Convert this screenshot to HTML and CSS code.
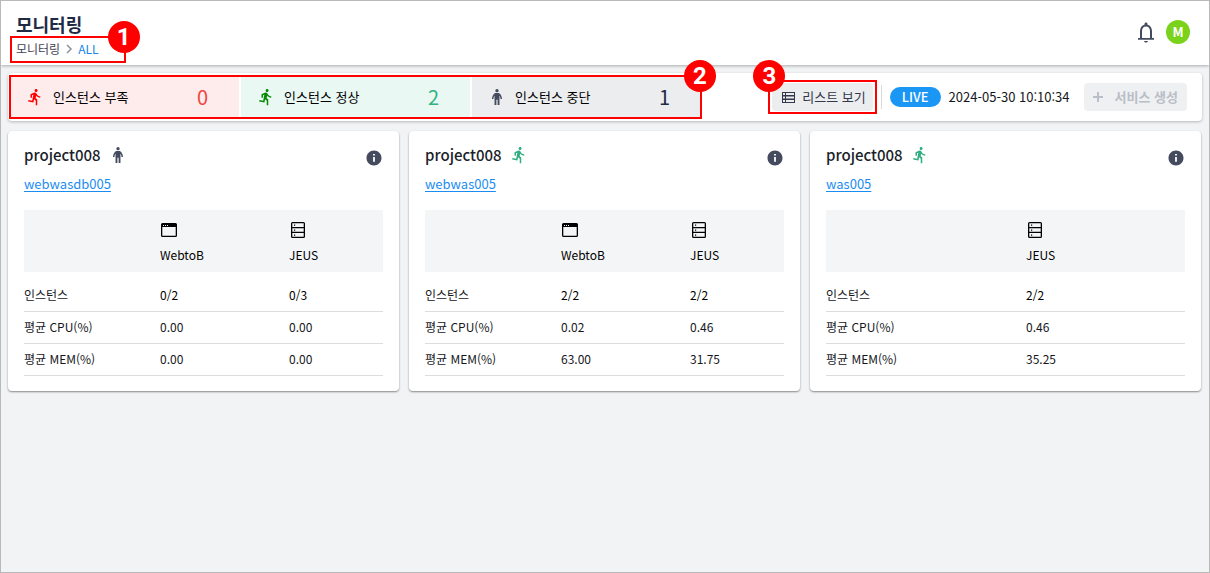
FILE: index.html
```html
<!DOCTYPE html>
<html lang="ko">
<head>
<meta charset="utf-8">
<meta name="viewport" content="width=device-width, initial-scale=1">
<title>모니터링</title>
<link rel="stylesheet" href="styles.css">
</head>
<body class="page">
<svg class="sprite" aria-hidden="true">
  <symbol id="run" viewBox="0 0 24 24"><path d="M13.49 5.48c1.1 0 2-.9 2-2s-.9-2-2-2-2 .9-2 2 .9 2 2 2zm-3.6 13.9l1-4.4 2.1 2v6h2v-7.5l-2.1-2 .6-3c1.3 1.5 3.3 2.5 5.5 2.5v-2c-1.9 0-3.5-1-4.3-2.4l-1-1.6c-.4-.6-1-1-1.7-1-.3 0-.5.1-.8.1l-5.2 2.2v4.7h2v-3.4l1.8-.7-1.6 8.1-4.9-1-.4 2 7 1.4z"/></symbol>
  <symbol id="stand" viewBox="0 0 24 24"><circle cx="12" cy="3.500" r="2.200"/><path d="M9.500 6.500h5c2.500 1.500 4 4.500 4.200 8h-2c-.2-2-.6-3.200-1.400-4.100V22.500h-2.500v-7h-1.600v7H8.700V10.400c-.8.9-1.200 2.100-1.400 4.100h-2c.2-3.500 1.700-6.500 4.200-8z"/></symbol>
  <symbol id="info" viewBox="0 0 24 24"><path d="M12 2C6.480 2 2 6.480 2 12s4.480 10 10 10 10-4.480 10-10S17.520 2 12 2zm1.200 15h-2.400v-6.500h2.400V17zm0-8.200h-2.400V6.500h2.400v2.300z"/></symbol>
  <symbol id="window" viewBox="0 0 18 18"><path fill-rule="evenodd" d="M2.500 2h13A1.500 1.500 0 0 1 17 3.500v11a1.500 1.500 0 0 1-1.500 1.500h-13A1.500 1.500 0 0 1 1 14.500v-11A1.500 1.500 0 0 1 2.500 2zM2.300 6v8.700h13.400V6zM3 4v1h1V4zm2 0v1h1V4zm2 0v1h1V4z"/></symbol>
  <symbol id="server" viewBox="0 0 18 18"><path fill-rule="evenodd" d="M3.500 1h11A1.500 1.500 0 0 1 16 2.500v13a1.500 1.500 0 0 1-1.500 1.500h-11A1.500 1.500 0 0 1 2 15.500v-13A1.500 1.500 0 0 1 3.500 1zM3.300 2.300V6h11.400V2.300zm0 5v3.400h11.400V7.300zm0 4.700v3.700h11.400V12zM5 3.500h1.200v1.200H5zm0 5h1.200v1.200H5zm0 5h1.200v1.200H5z"/></symbol>
</svg>

<header class="header">
  <div>
    <h1 class="title">모니터링</h1>
    <nav class="crumbs">
      <span>모니터링</span>
      <svg class="chevron" viewBox="0 0 8 10"><path d="M2 1l4 4-4 4"/></svg>
      <a class="current" href="#">ALL</a>
      <span class="mark mark-crumbs"><b class="pin">1</b></span>
    </nav>
  </div>
  <div class="account">
    <button class="bell" aria-label="알림"><svg viewBox="0 0 24 24"><path d="M12 22.500c1.100 0 2-.6 2-1.500h-4c0 .9.9 1.500 2 1.500zm6-4.500v-7c0-3.070-1.630-5.640-4.500-6.320V4c0-.83-.67-1.500-1.500-1.500s-1.500.67-1.500 1.500v.68C7.640 5.360 6 7.920 6 11v7H4v1.800h16V18h-2zm-2 0H8v-7c0-2.480 1.510-4.500 4-4.500s4 2.020 4 4.500v7z"/></svg></button>
    <button class="avatar">M</button>
  </div>
</header>

<main class="main">
  <section class="toolbar">
    <div class="stats">
      <div class="stat short"><svg class="icon"><use href="#run"/></svg><span>인스턴스 부족</span><span class="count">0</span></div>
      <div class="stat normal"><svg class="icon"><use href="#run"/></svg><span>인스턴스 정상</span><span class="count">2</span></div>
      <div class="stat stopped"><svg class="icon"><use href="#stand"/></svg><span>인스턴스 중단</span><span class="count">1</span></div>
      <span class="mark mark-stats"><b class="pin">2</b></span>
    </div>
    <div class="actions">
      <div class="view">
        <button class="button"><svg class="list" viewBox="0 0 13 11"><path fill-rule="evenodd" d="M0 0h13v11H0zM1 1v2h2V1zm3 0v2h8V1zM1 4.500v2h2v-2zm3 0v2h8v-2zM1 8v2h2V8zm3 0v2h8V8z"/></svg>리스트 보기</button>
        <span class="mark mark-view"><b class="pin">3</b></span>
      </div>
      <span class="live">LIVE</span>
      <time class="time">2024-05-30 10:10:34</time>
      <button class="button create" disabled><svg class="plus" viewBox="0 0 12 12"><path d="M6 1v10M1 6h10"/></svg>서비스 생성</button>
    </div>
  </section>

  <div class="cards">
    <article class="card">
      <div class="card-head">
        <h2 class="project">project008</h2><svg class="icon state-stopped"><use href="#stand"/></svg>
        <button class="info" aria-label="정보"><svg><use href="#info"/></svg></button>
      </div>
      <a class="service" href="#">webwasdb005</a>
      <table class="table">
        <thead><tr><td class="col-label"></td><th class="col-web"><svg><use href="#window"/></svg>WebtoB</th><th><svg><use href="#server"/></svg>JEUS</th></tr></thead>
        <tbody>
          <tr class="instances"><th>인스턴스</th><td>0/2</td><td>0/3</td></tr>
          <tr><th>평균 CPU(%)</th><td>0.00</td><td>0.00</td></tr>
          <tr><th>평균 MEM(%)</th><td>0.00</td><td>0.00</td></tr>
        </tbody>
      </table>
    </article>
    <article class="card">
      <div class="card-head">
        <h2 class="project">project008</h2><svg class="icon state-running"><use href="#run"/></svg>
        <button class="info" aria-label="정보"><svg><use href="#info"/></svg></button>
      </div>
      <a class="service" href="#">webwas005</a>
      <table class="table">
        <thead><tr><td class="col-label"></td><th class="col-web"><svg><use href="#window"/></svg>WebtoB</th><th><svg><use href="#server"/></svg>JEUS</th></tr></thead>
        <tbody>
          <tr class="instances"><th>인스턴스</th><td>2/2</td><td>2/2</td></tr>
          <tr><th>평균 CPU(%)</th><td>0.02</td><td>0.46</td></tr>
          <tr><th>평균 MEM(%)</th><td>63.00</td><td>31.75</td></tr>
        </tbody>
      </table>
    </article>
    <article class="card">
      <div class="card-head">
        <h2 class="project">project008</h2><svg class="icon state-running"><use href="#run"/></svg>
        <button class="info" aria-label="정보"><svg><use href="#info"/></svg></button>
      </div>
      <a class="service" href="#">was005</a>
      <table class="table">
        <thead><tr><td class="col-label-wide"></td><th><svg><use href="#server"/></svg>JEUS</th></tr></thead>
        <tbody>
          <tr class="instances"><th>인스턴스</th><td>2/2</td></tr>
          <tr><th>평균 CPU(%)</th><td>0.46</td></tr>
          <tr><th>평균 MEM(%)</th><td>35.25</td></tr>
        </tbody>
      </table>
    </article>
  </div>
</main>
</body>
</html>
```
FILE: styles.css
```css
* { box-sizing: border-box; }
.page {
  margin: 0;
  min-height: 100vh;
  border: 1px solid #b9b9b9;
  background: #f2f3f5;
  color: #15171c;
  font: 13px/20px "Noto Sans CJK KR", "Noto Sans", sans-serif;
}
button { border: 0; padding: 0; font: inherit; }
svg { display: block; fill: currentColor; }
.sprite { position: absolute; width: 0; height: 0; }
.icon { width: 18px; height: 18px; flex: none; }

.header {
  display: flex;
  justify-content: space-between;
  align-items: flex-start;
  padding: 10px 19px 6px 15px;
  background: #fff;
  box-shadow: 0 1px 3px rgba(0, 0, 0, .3);
}
.title { margin: 0; font-size: 18px; line-height: 26px; color: #1f2a44; }
.crumbs {
  position: relative;
  display: flex;
  align-items: center;
  width: max-content;
  font-size: 12px;
  line-height: 20px;
  margin-top: 2px;
  color: #3f4452;
}
.chevron { width: 8px; height: 10px; margin: 0 5px; fill: none; stroke: #8d929c; stroke-width: 1.5; }
.current { color: #1484ea; text-decoration: none; }
.account { display: flex; align-items: center; gap: 8px; padding-top: 9px; }
.bell { background: none; color: #444b5e; }
.bell svg { width: 24px; height: 24px; }
.avatar {
  width: 24px;
  height: 24px;
  border-radius: 50%;
  background: #7ad31a;
  color: #fff;
  font-weight: 700;
  line-height: 24px;
}

.mark { position: absolute; border: 2px solid #f00; pointer-events: none; }
.pin {
  position: absolute;
  width: 32px;
  height: 32px;
  border-radius: 50%;
  background: #f00;
  color: #fff;
  font: 700 24px/32px Roboto, sans-serif;
  text-align: center;
}
.mark-crumbs { inset: -3px -27px -4px -6px; }
.mark-crumbs .pin { top: -17px; right: -16px; }
.mark-stats { inset: -2px -1px; }
.mark-stats .pin { top: -17px; right: -16px; }
.mark-view { inset: -3px -4px; }
.mark-view .pin { top: -22px; left: -17px; }

.main { padding: 8px 7px; }
.toolbar {
  display: flex;
  justify-content: space-between;
  padding: 4px 15px 4px 2px;
  border-radius: 4px;
  background: #fff;
  box-shadow: 0 1px 3px rgba(0, 0, 0, .25);
}
.stats { position: relative; display: grid; grid-template-columns: repeat(3, 1fr); gap: 2px; flex: 0 1 691px; }
.stat { display: flex; align-items: center; height: 40px; padding: 0 31px 0 16px; gap: 9px; color: #000; }
.count { margin-left: auto; font-size: 20px; }
.short { background: #feebeb; }
.short .icon { color: #f00; }
.short .count { color: #f0453f; }
.normal { background: #e9f8f3; }
.normal .icon { color: #058a05; }
.normal .count { color: #2fb380; }
.stopped { background: #ecedef; }
.stopped .icon { color: #444b5e; }
.stopped .count { color: #1f2a44; }
.actions { display: flex; align-items: center; }
.view { position: relative; margin-right: 17px; }
.view::after { content: ""; position: absolute; top: 2px; right: -9px; width: 1px; height: 24px; background: #d9dbdf; }
.button {
  display: flex;
  align-items: center;
  gap: 7px;
  height: 28px;
  padding: 0 7px 0 10px;
  border-radius: 4px;
  background: #ecedef;
  color: #33394a;
}
.list { width: 13px; height: 11px; }
.live {
  padding: 0 12px;
  border-radius: 10px;
  background: #1a96f5;
  color: #fff;
  font-weight: 500;
}
.time { margin: 0 14px 0 8px; }
.create { gap: 11px; padding: 0 9px 0 8px; background: #eff0f2; color: #b9bec8; font-weight: 700; }
.plus { width: 12px; height: 12px; stroke: currentColor; stroke-width: 2; }

.cards { display: grid; grid-template-columns: repeat(3, 1fr); gap: 10px; margin: 10px 1px 0 0; }
.card {
  padding: 11px 16px 15px;
  border-radius: 4px;
  background: #fff;
  box-shadow: 0 1px 2px rgba(0, 0, 0, .45);
}
.card-head { display: flex; align-items: center; gap: 8px; height: 26px; }
.project { margin: 0; font-size: 15px; font-weight: 500; line-height: 24px; color: #1b1f2b; }
.state-stopped { color: #444b5e; }
.state-running { color: #2fae80; }
.info { margin: 6px 0 0 auto; background: none; color: #444b5e; }
.info svg { width: 18px; height: 18px; }
.service { display: block; width: max-content; margin: 5px 0 15px; line-height: 22px; color: #1b8df2; text-underline-offset: 2px; }
.table { width: 100%; table-layout: fixed; border-collapse: collapse; font-size: 12px; line-height: 19px; }
.table th, .table td { padding: 5px 0 7px; text-align: left; font-weight: 400; }
.table thead { background: #f4f5f7; }
.table thead th { padding: 11px 0 8px; color: #000; }
.table thead svg { width: 18px; height: 18px; margin-bottom: 6px; color: #000; }
.table tbody tr { border-bottom: 1px solid #dcdddf; }
.table .instances > * { padding-top: 13px; }
.instances td { color: #000; }
.col-label { width: 136px; }
.col-web { width: 129px; }
.col-label-wide { width: 200px; }
```
